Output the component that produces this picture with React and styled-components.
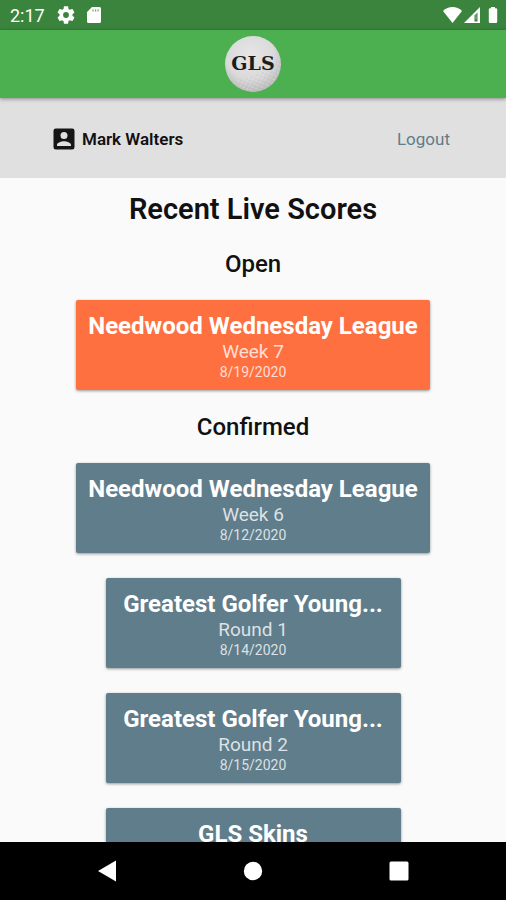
import React from 'react'
import styled, { createGlobalStyle } from 'styled-components'

const GlobalStyle = createGlobalStyle`
  * {
    box-sizing: border-box;
  }
  body {
    margin: 0;
    background-color: #fafafa;
    font-family: Roboto, 'Liberation Sans', sans-serif;
  }
`

const Screen = styled.div`
  display: flex;
  flex-direction: column;
  height: 100vh;
  overflow: hidden;
`

const StatusBar = styled.div`
  display: flex;
  flex: none;
  align-items: center;
  justify-content: space-between;
  height: 30px;
  padding: 0 6px 0 10px;
  background-color: #3a843d;
  color: #ffffff;
  font-size: 18px;
`
const StatusGroup = styled.div`
  display: flex;
  align-items: center;
  gap: ${props => props.$gap};
  svg {
    display: block;
    fill: #ffffff;
  }
`

const Header = styled.header`
  display: flex;
  flex: none;
  align-items: center;
  justify-content: center;
  height: 68px;
  background-color: #4caf50;
  box-shadow: 0 1px 4px rgba(0, 0, 0, 0.4);
  z-index: 1;
`

const UserBar = styled.div`
  display: flex;
  flex: none;
  align-items: center;
  justify-content: space-between;
  height: 80px;
  padding: 2px 56px 0 50px;
  background-color: #e0e0e0;
`
const UserName = styled.div`
  display: flex;
  align-items: center;
  gap: 4px;
  color: #111111;
  font-size: 17px;
  font-weight: 600;
  svg {
    display: block;
    fill: #161616;
  }
`
const Logout = styled.a`
  color: #607d8b;
  font-size: 17px;
  text-decoration: none;
`

const Scores = styled.main`
  display: flex;
  flex: 1;
  flex-direction: column;
  align-items: center;
  min-height: 0;
  padding-top: 14px;
  overflow: hidden;
`
const Title = styled.h1`
  margin: 0;
  color: #111111;
  font-size: 29px;
  font-weight: 600;
  line-height: 35px;
`
const SectionTitle = styled.h2`
  margin: 23px 0 22px;
  color: #111111;
  font-size: 24px;
  font-weight: 500;
  line-height: 28px;
`
const CardList = styled.div`
  display: flex;
  flex: none;
  flex-direction: column;
  align-items: center;
  gap: 25px;
  width: 100%;
`
const Card = styled.button`
  flex: none;
  width: ${props => (props.$wide ? '70%' : '295px')};
  padding: 12px 8px 10px;
  border: 0;
  border-radius: 2px;
  background-color: ${props => (props.$open ? '#ff7040' : '#607d8b')};
  box-shadow: 0 1px 3px rgba(0, 0, 0, 0.4);
  color: #ffffff;
  font-family: inherit;
  text-align: center;
  cursor: pointer;
`
const CardLine = styled.span`
  display: block;
  white-space: nowrap;
`
const League = styled(CardLine)`
  font-size: 24px;
  font-weight: 700;
  line-height: 28px;
`
const Round = styled(CardLine)`
  color: rgba(255, 255, 255, 0.78);
  font-size: 19px;
  line-height: 24px;
`
const PlayedOn = styled(CardLine)`
  color: rgba(255, 255, 255, 0.78);
  font-size: 14px;
  line-height: 16px;
`

const NavBar = styled.nav`
  display: grid;
  flex: none;
  grid-template-columns: repeat(3, 1fr);
  height: 58px;
  padding: 0 34px;
  background-color: #000000;
`
const NavButton = styled.button`
  display: flex;
  align-items: center;
  justify-content: center;
  padding: 0;
  border: 0;
  background: none;
  cursor: pointer;
  svg {
    fill: #ffffff;
  }
`

const Logo = () => (
  <svg width="56" height="56" viewBox="0 0 56 56">
    <defs>
      <radialGradient id="ball" cx="0.45" cy="0.35" r="0.65">
        <stop offset="0" stopColor="#e6e6e6" />
        <stop offset="0.65" stopColor="#dadada" />
        <stop offset="1" stopColor="#b8b8b8" />
      </radialGradient>
      <pattern
        id="dimples"
        width="4"
        height="4"
        patternUnits="userSpaceOnUse"
        patternTransform="rotate(25)"
      >
        <circle cx="2" cy="2" r="1.3" fill="#a8a8a8" opacity="0.35" />
        <circle cx="2.5" cy="2.5" r="1.1" fill="#eeeeee" opacity="0.5" />
      </pattern>
    </defs>
    <circle cx="28" cy="28" r="28" fill="url(#ball)" />
    <path d="M10 44C26 42 42 36 55 22A28 28 0 0 1 18 54Z" fill="url(#dimples)" />
    <text
      x="28"
      y="34"
      textAnchor="middle"
      fontFamily="'DejaVu Serif', serif"
      fontSize="19"
      fontWeight="700"
      fill="#1c1c1c"
    >
      GLS
    </text>
  </svg>
)

const confirmed = [
  { league: 'Needwood Wednesday League', round: 'Week 6', date: '8/12/2020', wide: true },
  { league: 'Greatest Golfer Young...', round: 'Round 1', date: '8/14/2020' },
  { league: 'Greatest Golfer Young...', round: 'Round 2', date: '8/15/2020' },
  { league: 'GLS Skins' }
]

const ScoreCard = props => (
  <Card type="button" $wide={props.wide} $open={props.open}>
    <League>{props.league}</League>
    <Round>{props.round || '\u00a0'}</Round>
    <PlayedOn>{props.date || '\u00a0'}</PlayedOn>
  </Card>
)

const App = () => {
  return (
    <>
      <GlobalStyle />
      <Screen>
        <StatusBar>
          <StatusGroup $gap="12px">
            <span>2:17</span>
            <svg width="18" height="18" viewBox="2 2 20 20">
              <path d="M19.14 12.94c.04-.3.06-.61.06-.94 0-.32-.02-.64-.07-.94l2.03-1.58c.18-.14.23-.41.12-.61l-1.92-3.32c-.12-.22-.37-.29-.59-.22l-2.39.96c-.5-.38-1.03-.7-1.62-.94l-.36-2.54c-.04-.24-.24-.41-.48-.41h-3.84c-.24 0-.43.17-.47.41l-.36 2.54c-.59.24-1.13.57-1.62.94l-2.39-.96c-.22-.08-.47 0-.59.22L2.74 8.87c-.12.21-.08.47.12.61l2.03 1.58c-.05.3-.09.63-.09.94s.02.64.07.94l-2.03 1.58c-.18.14-.23.41-.12.61l1.92 3.32c.12.22.37.29.59.22l2.39-.96c.5.38 1.03.7 1.62.94l.36 2.54c.05.24.24.41.48.41h3.84c.24 0 .44-.17.47-.41l.36-2.54c.59-.24 1.13-.56 1.62-.94l2.39.96c.22.08.47 0 .59-.22l1.92-3.32c.12-.22.07-.47-.12-.61l-2.01-1.58zM12 15.2a3.2 3.2 0 1 1 0-6.4 3.2 3.2 0 0 1 0 6.4z" />
            </svg>
            <svg width="14" height="16" viewBox="0 0 14 16">
              <path d="M5 0h7.500a1.500 1.500 0 0 1 1.500 1.500v13a1.500 1.500 0 0 1-1.500 1.500h-11a1.500 1.500 0 0 1-1.500-1.500V5z" />
              <path d="M5.500 2.500h1.200v2H5.500zM8 2.500h1.200v2H8zM10.500 2.500h1.200v2h-1.200z" fill="#6da36f" />
            </svg>
          </StatusGroup>
          <StatusGroup $gap="2px">
            <svg width="19" height="16" viewBox="0 0 19 16">
              <path d="M9.500 16L0 4C5 -1.200 14 -1.200 19 4z" />
            </svg>
            <svg width="16" height="16" viewBox="0 0 16 16">
              <path d="M0 16L16 0v16z" />
              <path d="M10.500 8.500l3-3v9h-3z" fill="#3a843d" />
              <path d="M11.500 7.500h1v5h-1z" fill="#8fba90" />
            </svg>
            <svg width="18" height="16" viewBox="0 0 18 16">
              <path d="M9 0h4v1.200h1q1.200 0 1.200 1.200V14.800q0 1.200-1.200 1.200H8q-1.200 0-1.200-1.200V2.400q0-1.200 1.200-1.200h1z" />
            </svg>
          </StatusGroup>
        </StatusBar>
        <Header>
          <Logo />
        </Header>
        <UserBar>
          <UserName>
            <svg width="28" height="28" viewBox="0 0 24 24">
              <path d="M3 5v14a2 2 0 0 0 2 2h14a2 2 0 0 0 2-2V5a2 2 0 0 0-2-2H5a2 2 0 0 0-2 2zm12 4a3 3 0 1 1-6 0 3 3 0 0 1 6 0zm-9 8c0-2 4-3.100 6-3.100s6 1.100 6 3.100v1H6v-1z" />
            </svg>
            <span>Mark Walters</span>
          </UserName>
          <Logout href="#logout">Logout</Logout>
        </UserBar>
        <Scores>
          <Title>Recent Live Scores</Title>
          <SectionTitle>Open</SectionTitle>
          <CardList>
            <ScoreCard open wide league="Needwood Wednesday League" round="Week 7" date="8/19/2020" />
          </CardList>
          <SectionTitle>Confirmed</SectionTitle>
          <CardList>
            {confirmed.map((score, i) => (
              <ScoreCard key={i} {...score} />
            ))}
          </CardList>
        </Scores>
        <NavBar>
          <NavButton type="button" aria-label="Back">
            <svg width="20" height="22" viewBox="0 0 20 22">
              <path d="M1 11L19 0.500v21z" />
            </svg>
          </NavButton>
          <NavButton type="button" aria-label="Home">
            <svg width="20" height="20" viewBox="0 0 20 20">
              <circle cx="10" cy="10" r="9.200" />
            </svg>
          </NavButton>
          <NavButton type="button" aria-label="Recent apps">
            <svg width="20" height="20" viewBox="0 0 20 20">
              <rect x="0.500" y="0.500" width="19" height="19" rx="1.500" />
            </svg>
          </NavButton>
        </NavBar>
      </Screen>
    </>
  )
}

export default App
